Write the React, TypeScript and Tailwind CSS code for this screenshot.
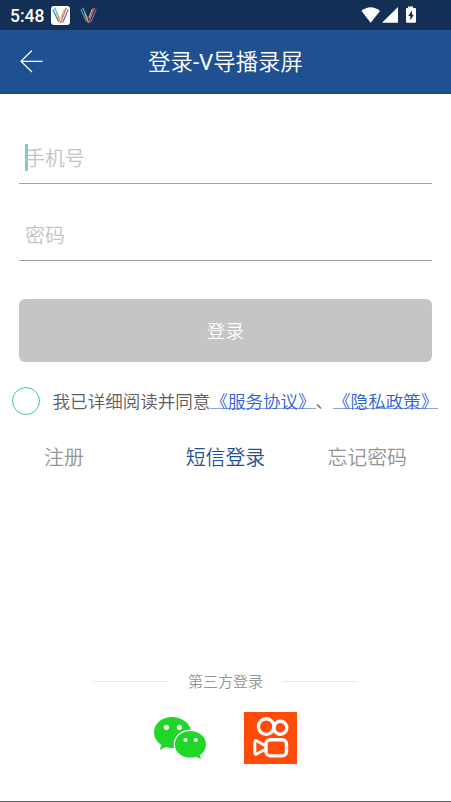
import React from 'react';
import { clsx } from 'clsx';

const stripes = [
  { d: 'M0.8 2.5 L7 15.5', color: '#3f8fc4' },
  { d: 'M2.8 0.8 L8.2 13', color: '#55b9c4' },
  { d: 'M5 6.5 L9 16.8', color: '#f0a040' },
  { d: 'M13.2 2 L9.4 11.5', color: '#e8bd45' },
  { d: 'M15.2 0.8 L9 17', color: '#d8685a' },
  { d: 'M17.2 2.5 L11.4 16.5', color: '#7563bd' },
];

const AppLogo: React.FC<{ className?: string }> = ({ className }) => (
  <svg viewBox="0 0 18 18" className={className} fill="none" strokeWidth="1.3">
    {stripes.map((s) => (
      <path key={s.d} d={s.d} stroke={s.color} />
    ))}
  </svg>
);

const StatusBar = () => (
  <div className="flex h-[30px] items-center bg-[#142f56] pl-[10px] pr-[34px] text-white">
    <span className="w-[41px] font-[Roboto] text-[17.5px] font-medium leading-[30px] whitespace-nowrap pt-[1px]">5:48</span>
    <span className="flex h-[19px] w-[19px] items-center justify-center rounded-[3px] bg-white">
      <AppLogo className="h-[17px] w-[17px]" />
    </span>
    <AppLogo className="ml-[10px] h-[17px] w-[17px]" />
    <svg viewBox="0 0 56 18" className="ml-auto h-[18px] w-[56px]" fill="#fff">
      <path d="M0.5 5 Q9.5 -2.4 19 5 L9.7 16.7 Z" />
      <path d="M37 1 V16.7 H21 Z" />
      <path
        fillRule="evenodd"
        d="M47 0.5 H52 V2 H54 Q55 2 55 3 V15.5 Q55 16.7 54 16.7 H46 Q45 16.7 45 15.5 V3 Q45 2 46 2 H47 Z M51 4.5 L47.2 10 H49.3 V14.2 L52.9 8.7 H51 Z"
      />
    </svg>
  </div>
);

const Header = () => (
  <header className="relative flex h-[64px] items-center justify-center border-b border-[#1a4684] bg-[#1f5192] text-white">
    <svg viewBox="0 0 24 24" className="absolute left-[20px] top-[19px] h-6 w-6" fill="none" stroke="#fff" strokeWidth="1.2">
      <path d="M12 1.5 L1 12.3 L12 23 M1 12.3 H22.7" />
    </svg>
    <h1 className="font-[Roboto,'Noto_Sans_CJK_SC',sans-serif] text-[22.4px] leading-[32px]">
      登录<span className="font-normal">-V</span>导播录屏
    </h1>
  </header>
);

interface FieldProps {
  label: string;
  focused?: boolean;
}

const Field: React.FC<FieldProps> = ({ label, focused }) => (
  <div className="relative flex h-[51px] items-center border-b border-[#a4a4a4] pl-[6px] text-[19.9px] text-[#c3c3c3]">
    {focused && <span className="absolute left-[6px] top-[11px] h-[27px] w-[3px] bg-[#80cbc4]" />}
    <span className="relative">{label}</span>
  </div>
);

const Policy: React.FC<{ children: React.ReactNode }> = ({ children }) => (
  <a className="h-[16px] border-b border-[#86a6e6] leading-[16px] text-[#2e62d0]">{children}</a>
);

const links = [
  { label: '注册', style: 'pl-[44px] text-left text-[#949494]' },
  { label: '短信登录', style: 'text-center text-[#1f5192]' },
  { label: '忘记密码', style: 'pr-[44px] text-right text-[#949494]' },
];

const WechatIcon = () => (
  <svg viewBox="0 0 54 54" className="h-[54px] w-[54px]">
    <path
      fill="#20d628"
      d="M19 5 C8.5 5 1 11.8 1 20.5 C1 25.5 3.8 30 8.4 32.9 L6.7 38 L13 35 Q17 36.5 22 36 L38 18 C36 10.5 28.5 5 19 5 Z"
    />
    <path
      fill="#20d628"
      stroke="#fff"
      strokeWidth="1.2"
      d="M37.2 18.3 C28.5 18.3 21.3 24.2 21.3 32.4 C21.3 40.6 28.5 46.2 37.2 46.2 Q40.5 46.2 43 45.3 L48.9 48.3 L47.4 43.4 C51.2 40.8 53.5 37 53.5 32.4 C53.5 24.2 46.1 18.3 37.2 18.3 Z"
    />
    <g fill="#fff">
      <circle cx="13.4" cy="15.3" r="2.6" />
      <circle cx="26.4" cy="15.3" r="2.6" />
      <circle cx="32.5" cy="28" r="2.1" />
      <circle cx="42.7" cy="28" r="2.1" />
    </g>
  </svg>
);

const KuaishouIcon = () => (
  <svg viewBox="0 0 53 52" className="h-[52px] w-[53px] bg-[#ff4a08]" fill="none" stroke="#fff" strokeWidth="3.4">
    <circle cx="22.2" cy="14.6" r="7.8" />
    <circle cx="36.3" cy="15.8" r="6.5" />
    <rect x="22" y="27.7" width="20.5" height="16.2" rx="4.5" />
    <path d="M21.5 33.8 L12.5 28.8 Q10.8 28.2 10.8 30 V40.6 Q10.8 42.6 12.5 42 L21.5 37.2" strokeWidth="3" strokeLinejoin="round" />
  </svg>
);

export default function App() {
  return (
    <div className="flex h-[802px] w-[451px] flex-col overflow-hidden border-b border-[#686868] bg-white font-['Noto_Sans_CJK_SC',sans-serif] font-[350]">
      <StatusBar />
      <Header />
      <main className="flex flex-1 flex-col">
        <div className="mx-[19px] mt-[39px] flex flex-col gap-[26px]">
          <Field label="手机号" focused />
          <Field label="密码" />
        </div>
        <button className="mx-[19px] mt-[38px] h-[63px] rounded-[6px] bg-[#c5c5c5] text-[18.7px] text-white">登录</button>
        <div className="mt-[25px] flex h-[28px] items-center whitespace-nowrap pl-[12px] text-[17.54px] text-[#5c5c5c]">
          <span className="mr-[12.6px] h-[28px] w-[28px] shrink-0 rounded-full border-[1.5px] border-[#3dca94]" />
          <span className="leading-[16px]">我已详细阅读并同意</span>
          <Policy>《服务协议》</Policy>
          <span className="leading-[16px]">、</span>
          <Policy>《隐私政策》</Policy>
        </div>
        <div className="mt-[27px] grid grid-cols-3 text-[19.9px] leading-[30px]">
          {links.map((link) => (
            <a key={link.label} className={clsx('whitespace-nowrap', link.style)}>
              {link.label}
            </a>
          ))}
        </div>
        <div className="mt-auto flex items-center justify-center gap-[19px] text-[15px] leading-[22px] text-[#949494]">
          <span className="h-px w-[75px] bg-[#e8e8e8]" />
          <span>第三方登录</span>
          <span className="h-px w-[75px] bg-[#e8e8e8]" />
        </div>
        <div className="mt-[20px] mb-[35px] flex justify-center gap-[37px] pr-[2px]">
          <WechatIcon />
          <KuaishouIcon />
        </div>
      </main>
    </div>
  );
}
